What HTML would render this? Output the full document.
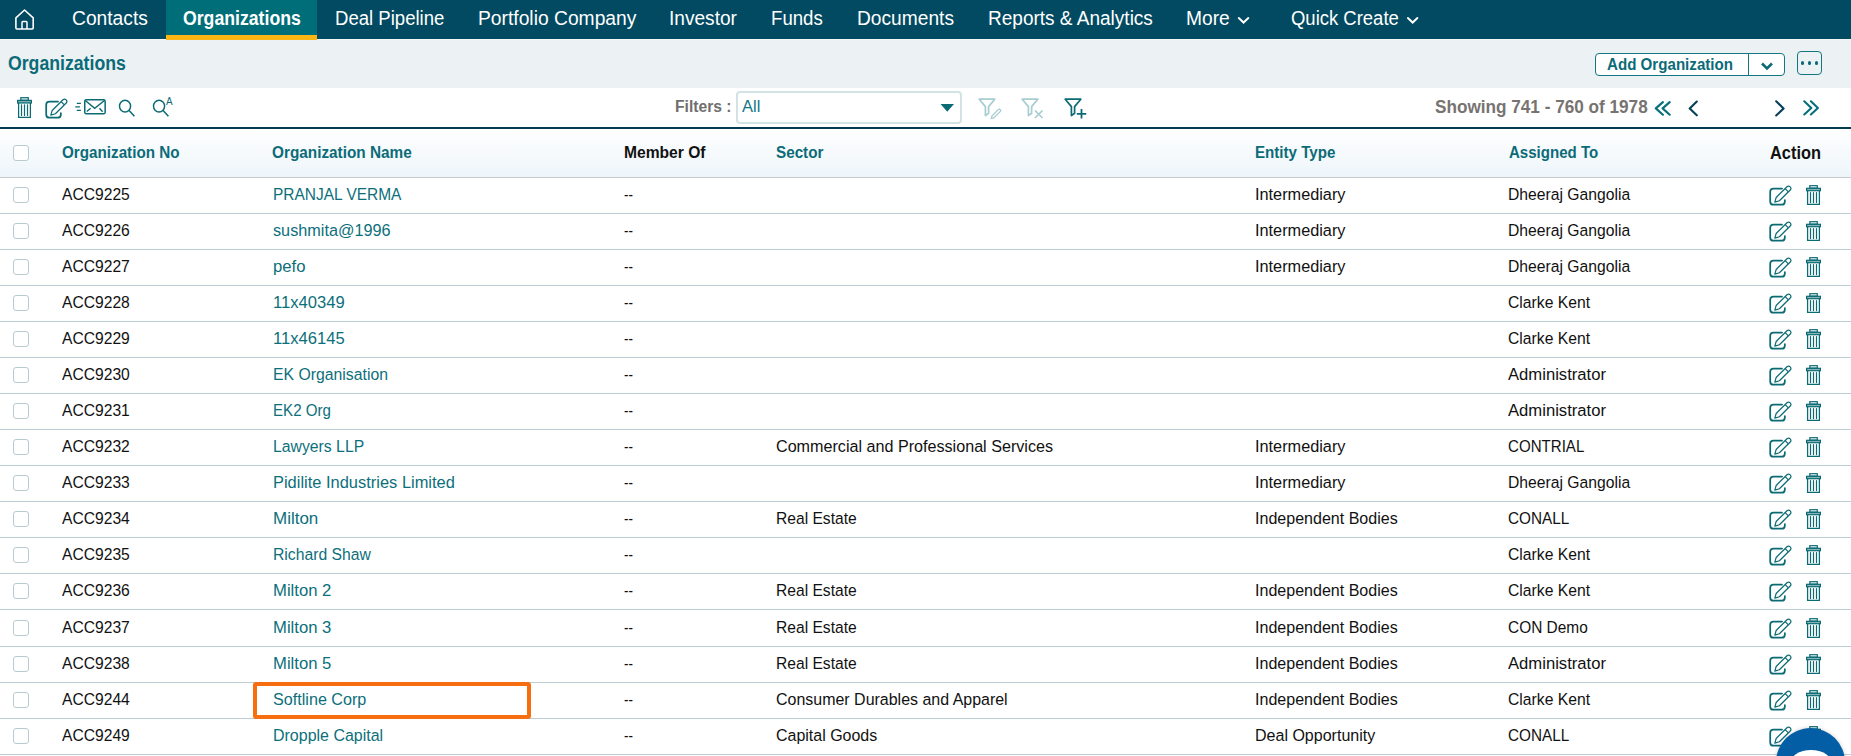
<!DOCTYPE html>
<html><head><meta charset="utf-8"><style>
html,body{margin:0;padding:0}
body{width:1851px;height:756px;overflow:hidden;position:relative;background:#fff;font-family:"Liberation Sans",sans-serif}
.t{position:absolute;white-space:pre;display:inline-block;transform-origin:0 0}
svg{overflow:visible}
</style></head><body>
<div style="position:absolute;left:0;top:0;width:1851px;height:39px;background:#014a62"></div>
<div style="position:absolute;left:0;top:39px;width:1851px;height:1px;background:#f4f7f9"></div>
<div style="position:absolute;left:166px;top:0;width:151px;height:35px;background:#006e78"></div>
<div style="position:absolute;left:166px;top:35px;width:151px;height:5px;background:#fbb515"></div>
<svg style="position:absolute;left:13px;top:8px" width="24" height="24" viewBox="0 0 24 24"><path d="M2.9 20 Q2.9 21 3.9 21 H19.2 Q20.2 21 20.2 20 V9.8 L11.55 2 L2.9 9.8 Z" fill="none" stroke="#fff" stroke-width="1.6" stroke-linejoin="round"/><path d="M9 21 V14.4 Q9 13.6 9.8 13.6 H13.2 Q14 13.6 14 14.4 V21" fill="none" stroke="#fff" stroke-width="1.5"/></svg>
<span class="t" style="left:72px;top:8.83px;font-size:19.38px;line-height:19.38px;font-weight:400;color:#ffffff;font-family:'Liberation Sans', sans-serif;transform:scaleX(0.9926);">Contacts</span>
<span class="t" style="left:182.5px;top:8.83px;font-size:19.38px;line-height:19.38px;font-weight:700;color:#ffffff;font-family:'Liberation Sans', sans-serif;transform:scaleX(0.9127);">Organizations</span>
<span class="t" style="left:334.5px;top:8.83px;font-size:19.38px;line-height:19.38px;font-weight:400;color:#ffffff;font-family:'Liberation Sans', sans-serif;transform:scaleX(0.9588);">Deal Pipeline</span>
<span class="t" style="left:477.5px;top:8.83px;font-size:19.38px;line-height:19.38px;font-weight:400;color:#ffffff;font-family:'Liberation Sans', sans-serif;transform:scaleX(0.9946);">Portfolio Company</span>
<span class="t" style="left:669.3px;top:8.83px;font-size:19.38px;line-height:19.38px;font-weight:400;color:#ffffff;font-family:'Liberation Sans', sans-serif;transform:scaleX(0.9864);">Investor</span>
<span class="t" style="left:771px;top:8.83px;font-size:19.38px;line-height:19.38px;font-weight:400;color:#ffffff;font-family:'Liberation Sans', sans-serif;transform:scaleX(0.9625);">Funds</span>
<span class="t" style="left:857px;top:8.83px;font-size:19.38px;line-height:19.38px;font-weight:400;color:#ffffff;font-family:'Liberation Sans', sans-serif;transform:scaleX(0.9904);">Documents</span>
<span class="t" style="left:987.5px;top:8.83px;font-size:19.38px;line-height:19.38px;font-weight:400;color:#ffffff;font-family:'Liberation Sans', sans-serif;transform:scaleX(0.9823);">Reports &amp; Analytics</span>
<span class="t" style="left:1186px;top:8.83px;font-size:19.38px;line-height:19.38px;font-weight:400;color:#ffffff;font-family:'Liberation Sans', sans-serif;transform:scaleX(0.9922);">More</span>
<span class="t" style="left:1291px;top:8.83px;font-size:19.38px;line-height:19.38px;font-weight:400;color:#ffffff;font-family:'Liberation Sans', sans-serif;transform:scaleX(0.9541);">Quick Create</span>
<svg style="position:absolute;left:1230px;top:10px" width="200" height="20" viewBox="0 0 200 20"><path d="M8.8 8.1 L13.55 12.6 L18.3 8.1 M177.9 8.1 L182.65 12.6 L187.4 8.1" fill="none" stroke="#fff" stroke-width="2" stroke-linecap="round"/></svg>
<div style="position:absolute;left:0;top:40px;width:1851px;height:48px;background:#ecf1f4"></div>
<span class="t" style="left:8.3px;top:53.73px;font-size:19.38px;line-height:19.38px;font-weight:700;color:#0b6b78;font-family:'Liberation Sans', sans-serif;transform:scaleX(0.9127);">Organizations</span>
<div style="position:absolute;left:1595px;top:53px;width:188px;height:21px;border:1px solid #137781;border-radius:4px;background:#fff"></div>
<div style="position:absolute;left:1748px;top:54px;width:1px;height:21px;background:#137781"></div>
<span class="t" style="left:1606.5px;top:56.13px;font-size:16.32px;line-height:16.32px;font-weight:700;color:#0b6b78;font-family:'Liberation Sans', sans-serif;transform:scaleX(0.9269);">Add Organization</span>
<svg style="position:absolute;left:1759px;top:60px" width="16" height="12" viewBox="0 0 16 12"><path d="M3 3.5 L8 8.5 L13 3.5" fill="none" stroke="#0b6b78" stroke-width="2.6"/></svg>
<div style="position:absolute;left:1797px;top:51px;width:23px;height:22px;border:1px solid #137781;border-radius:4px;background:transparent"></div>
<div style="position:absolute;left:1800.9px;top:61px;width:3.6px;height:3.6px;border-radius:50%;background:#0b6b78"></div>
<div style="position:absolute;left:1807.7px;top:61px;width:3.6px;height:3.6px;border-radius:50%;background:#0b6b78"></div>
<div style="position:absolute;left:1814.5px;top:61px;width:3.6px;height:3.6px;border-radius:50%;background:#0b6b78"></div>
<div style="position:absolute;left:0;top:127px;width:1851px;height:2px;background:#043a52"></div>
<svg style="position:absolute;left:17px;top:97px" width="16" height="23" preserveAspectRatio="none" viewBox="0 0 16 22"><rect x="3.8" y="0.7" width="7.5" height="2.4" fill="none" stroke="#0b6b74" stroke-width="1.2"/><rect x="0.6" y="3.3" width="13.8" height="2.4" fill="#0b6b74" fill-opacity="0.5" stroke="#0b6b74" stroke-width="1.2"/><path d="M1.6 5.8 V19.4 H13.4 V5.8" fill="none" stroke="#0b6b74" stroke-width="1.25"/><path d="M4.5 7.6 V17.6 M7.5 7.6 V17.6 M10.5 7.6 V17.6" stroke="#0b6b74" stroke-width="1.2" stroke-linecap="round"/></svg>
<svg style="position:absolute;left:44.7px;top:97.6px" width="23" height="22" viewBox="0 0 23 22"><path d="M13 3.5 H4.5 Q1.2 3.5 1.2 6.8 V16.4 Q1.2 19.7 4.5 19.7 H12.55 Q15.85 19.7 15.85 16.4 V15.2" fill="none" stroke="#0b6b74" stroke-width="1.75" stroke-linecap="round"/><path d="M5.8 17.1 L7.16 12.51 L17.98 1.77 A2.3 2.3 0 0 1 21.22 5.03 L10.4 15.77 Z" fill="none" stroke="#0b6b74" stroke-width="1.2" stroke-linejoin="round"/><path d="M16.14 3.6 L19.38 6.86" stroke="#0b6b74" stroke-width="1.3"/></svg>
<svg style="position:absolute;left:74px;top:97px" width="34" height="20" viewBox="0 0 34 20"><rect x="10.75" y="2.75" width="20.4" height="14.1" rx="1.6" fill="none" stroke="#0b6b74" stroke-width="1.5"/><path d="M11 3.2 L20.7 11.4 L30.8 3.2" fill="none" stroke="#0b6b74" stroke-width="1.4"/><path d="M12.8 14.5 L16.6 11.3 M25.5 11.3 L28.6 14.7" stroke="#0b6b74" stroke-width="1.4"/><path d="M2.8 6.35 H6.9 M1.3 9.9 H5.9 M2.8 13.4 H6.9" stroke="#0b6b74" stroke-width="1.3"/></svg>
<svg style="position:absolute;left:118px;top:98px" width="18" height="20" viewBox="0 0 18 20"><ellipse cx="7.05" cy="8.1" rx="5.55" ry="5.95" fill="none" stroke="#0b6b74" stroke-width="1.45"/><path d="M11.1 12.4 L16.4 18.3" stroke="#0b6b74" stroke-width="1.5"/></svg>
<svg style="position:absolute;left:151.7px;top:98px" width="18" height="20" viewBox="0 0 18 20"><ellipse cx="7.05" cy="8.1" rx="5.55" ry="5.95" fill="none" stroke="#0b6b74" stroke-width="1.45"/><path d="M11.1 12.4 L16.4 18.3" stroke="#0b6b74" stroke-width="1.5"/></svg>
<span class="t" style="left:166.2px;top:96.53px;font-size:10.20px;line-height:10.20px;font-weight:400;color:#0b6b74;font-family:'Liberation Sans', sans-serif;transform:scaleX(0.9705);">A</span>
<span class="t" style="left:675.3px;top:98.13px;font-size:16.32px;line-height:16.32px;font-weight:700;color:#6f6f6f;font-family:'Liberation Sans', sans-serif;transform:scaleX(0.9604);">Filters :</span>
<div style="position:absolute;left:735.9px;top:91.1px;width:222.6px;height:28.7px;border:2px solid #d3e2e5;border-radius:4px"></div>
<span class="t" style="left:741.5px;top:98.13px;font-size:16.32px;line-height:16.32px;font-weight:400;color:#137884;font-family:'Liberation Sans', sans-serif;transform:scaleX(1.0143);">All</span>
<svg style="position:absolute;left:940px;top:103px" width="15" height="10" viewBox="0 0 15 10"><path d="M0.5 1 H14 L7.25 8.8 Z" fill="#0b6b74"/></svg>
<svg style="position:absolute;left:978px;top:98px" width="25" height="21" viewBox="0 0 25 21"><path d="M1.2 1.2 H16.8 L10.6 8.6 V15.2 L7.4 17.6 V8.6 Z" fill="none" stroke="#a7cdd1" stroke-width="1.7" stroke-linejoin="round"/><path d="M13.8 18.2 L20.2 11.6 Q21.3 10.6 22.3 11.6 Q23.2 12.6 22.2 13.6 L15.8 19.9 L13.3 20.5 Z" fill="none" stroke="#a7cdd1" stroke-width="1.3"/></svg>
<svg style="position:absolute;left:1021px;top:98px" width="25" height="21" viewBox="0 0 25 21"><path d="M1.2 1.2 H16.8 L10.6 8.6 V15.2 L7.4 17.6 V8.6 Z" fill="none" stroke="#a7cdd1" stroke-width="1.7" stroke-linejoin="round"/><path d="M14 12.5 L21.5 20 M21.5 12.5 L14 20" stroke="#a7cdd1" stroke-width="1.7"/></svg>
<svg style="position:absolute;left:1064px;top:98px" width="25" height="21" viewBox="0 0 25 21"><path d="M1.2 1.2 H16.8 L10.6 8.6 V15.2 L7.4 17.6 V8.6 Z" fill="none" stroke="#0b6b74" stroke-width="1.7" stroke-linejoin="round"/><path d="M17.5 11 V20.5 M12.8 15.8 H22.3" stroke="#0b6b74" stroke-width="1.8"/></svg>
<span class="t" style="left:1434.5px;top:98.63px;font-size:17.85px;line-height:17.85px;font-weight:700;color:#777371;font-family:'Liberation Sans', sans-serif;transform:scaleX(0.9618);">Showing 741 - 760 of 1978</span>
<svg style="position:absolute;left:1640px;top:92px" width="190" height="32" viewBox="0 0 190 32"><path d="M22.9 10.1 L15.8 16.4 L22.9 22.7 M29.7 10.1 L22.6 16.4 L29.7 22.7 M164.3 9.3 L171.3 15.9 L164.3 22.5 M170.9 9.3 L177.9 15.9 L170.9 22.5" fill="none" stroke="#06707b" stroke-width="2.1" stroke-linecap="round" stroke-linejoin="round"/><path d="M56.8 9.5 L49.7 16.4 L56.8 23.3 M136.2 9.3 L143.6 16.4 L136.2 23.5" fill="none" stroke="#063f58" stroke-width="2.1" stroke-linecap="round" stroke-linejoin="round"/></svg>
<div style="position:absolute;left:0;top:129px;width:1851px;height:48px;background:linear-gradient(#ffffff,#edf5fa)"></div>
<div style="position:absolute;left:0;top:177px;width:1851px;height:1px;background:#c8cacc"></div>
<div style="position:absolute;left:13px;top:145px;width:13.5px;height:13.5px;border:1.3px solid #b9cbd2;border-radius:3px;background:#fff"></div>
<span class="t" style="left:61.5px;top:143.93px;font-size:16.32px;line-height:16.32px;font-weight:700;color:#0b6b78;font-family:'Liberation Sans', sans-serif;transform:scaleX(0.9325);">Organization No</span>
<span class="t" style="left:272.3px;top:143.93px;font-size:16.32px;line-height:16.32px;font-weight:700;color:#0b6b78;font-family:'Liberation Sans', sans-serif;transform:scaleX(0.9398);">Organization Name</span>
<span class="t" style="left:624.4px;top:143.93px;font-size:16.32px;line-height:16.32px;font-weight:700;color:#111;font-family:'Liberation Sans', sans-serif;transform:scaleX(0.9572);">Member Of</span>
<span class="t" style="left:776px;top:143.93px;font-size:16.32px;line-height:16.32px;font-weight:700;color:#0b6b78;font-family:'Liberation Sans', sans-serif;transform:scaleX(0.9336);">Sector</span>
<span class="t" style="left:1254.5px;top:143.93px;font-size:16.32px;line-height:16.32px;font-weight:700;color:#0b6b78;font-family:'Liberation Sans', sans-serif;transform:scaleX(0.9276);">Entity Type</span>
<span class="t" style="left:1508.5px;top:143.93px;font-size:16.32px;line-height:16.32px;font-weight:700;color:#0b6b78;font-family:'Liberation Sans', sans-serif;transform:scaleX(0.9230);">Assigned To</span>
<span class="t" style="left:1769.5px;top:143.59px;font-size:18.36px;line-height:18.36px;font-weight:700;color:#111;font-family:'Liberation Sans', sans-serif;transform:scaleX(0.8924);">Action</span>
<div style="position:absolute;left:0;top:213px;width:1851px;height:1px;background:#bccdd5"></div>
<div style="position:absolute;left:13px;top:187px;width:13.5px;height:13.5px;border:1.3px solid #b9cbd2;border-radius:3px;background:#fff"></div>
<span class="t" style="left:61.8px;top:185.93px;font-size:16.32px;line-height:16.32px;font-weight:400;color:#111;font-family:'Liberation Sans', sans-serif;transform:scaleX(0.9589);">ACC9225</span>
<span class="t" style="left:273px;top:185.93px;font-size:16.32px;line-height:16.32px;font-weight:400;color:#0c6f7b;font-family:'Liberation Sans', sans-serif;transform:scaleX(0.9488);">PRANJAL VERMA</span>
<span class="t" style="left:624.2px;top:185.93px;font-size:16.32px;line-height:16.32px;font-weight:400;color:#111;font-family:'Liberation Sans', sans-serif;transform:scaleX(0.8214);">--</span>
<span class="t" style="left:1254.8px;top:185.93px;font-size:16.32px;line-height:16.32px;font-weight:400;color:#111;font-family:'Liberation Sans', sans-serif;transform:scaleX(0.9980);">Intermediary</span>
<span class="t" style="left:1507.8px;top:185.93px;font-size:16.32px;line-height:16.32px;font-weight:400;color:#111;font-family:'Liberation Sans', sans-serif;transform:scaleX(0.9619);">Dheeraj Gangolia</span>
<svg style="position:absolute;left:1769px;top:185px" width="23" height="22" viewBox="0 0 23 22"><path d="M13 3.5 H4.5 Q1.2 3.5 1.2 6.8 V16.4 Q1.2 19.7 4.5 19.7 H12.55 Q15.85 19.7 15.85 16.4 V15.2" fill="none" stroke="#0b6b74" stroke-width="1.75" stroke-linecap="round"/><path d="M5.8 17.1 L7.16 12.51 L17.98 1.77 A2.3 2.3 0 0 1 21.22 5.03 L10.4 15.77 Z" fill="none" stroke="#0b6b74" stroke-width="1.2" stroke-linejoin="round"/><path d="M16.14 3.6 L19.38 6.86" stroke="#0b6b74" stroke-width="1.3"/></svg>
<svg style="position:absolute;left:1806px;top:185px" width="16" height="22" viewBox="0 0 16 22"><rect x="3.8" y="0.7" width="7.5" height="2.4" fill="none" stroke="#0b6b74" stroke-width="1.2"/><rect x="0.6" y="3.3" width="13.8" height="2.4" fill="#0b6b74" fill-opacity="0.5" stroke="#0b6b74" stroke-width="1.2"/><path d="M1.6 5.8 V19.4 H13.4 V5.8" fill="none" stroke="#0b6b74" stroke-width="1.25"/><path d="M4.5 7.6 V17.6 M7.5 7.6 V17.6 M10.5 7.6 V17.6" stroke="#0b6b74" stroke-width="1.2" stroke-linecap="round"/></svg>
<div style="position:absolute;left:0;top:249px;width:1851px;height:1px;background:#bccdd5"></div>
<div style="position:absolute;left:13px;top:223px;width:13.5px;height:13.5px;border:1.3px solid #b9cbd2;border-radius:3px;background:#fff"></div>
<span class="t" style="left:61.8px;top:221.93px;font-size:16.32px;line-height:16.32px;font-weight:400;color:#111;font-family:'Liberation Sans', sans-serif;transform:scaleX(0.9589);">ACC9226</span>
<span class="t" style="left:273px;top:221.93px;font-size:16.32px;line-height:16.32px;font-weight:400;color:#0c6f7b;font-family:'Liberation Sans', sans-serif;transform:scaleX(0.9948);">sushmita@1996</span>
<span class="t" style="left:624.2px;top:221.93px;font-size:16.32px;line-height:16.32px;font-weight:400;color:#111;font-family:'Liberation Sans', sans-serif;transform:scaleX(0.8214);">--</span>
<span class="t" style="left:1254.8px;top:221.93px;font-size:16.32px;line-height:16.32px;font-weight:400;color:#111;font-family:'Liberation Sans', sans-serif;transform:scaleX(0.9980);">Intermediary</span>
<span class="t" style="left:1507.8px;top:221.93px;font-size:16.32px;line-height:16.32px;font-weight:400;color:#111;font-family:'Liberation Sans', sans-serif;transform:scaleX(0.9619);">Dheeraj Gangolia</span>
<svg style="position:absolute;left:1769px;top:221px" width="23" height="22" viewBox="0 0 23 22"><path d="M13 3.5 H4.5 Q1.2 3.5 1.2 6.8 V16.4 Q1.2 19.7 4.5 19.7 H12.55 Q15.85 19.7 15.85 16.4 V15.2" fill="none" stroke="#0b6b74" stroke-width="1.75" stroke-linecap="round"/><path d="M5.8 17.1 L7.16 12.51 L17.98 1.77 A2.3 2.3 0 0 1 21.22 5.03 L10.4 15.77 Z" fill="none" stroke="#0b6b74" stroke-width="1.2" stroke-linejoin="round"/><path d="M16.14 3.6 L19.38 6.86" stroke="#0b6b74" stroke-width="1.3"/></svg>
<svg style="position:absolute;left:1806px;top:221px" width="16" height="22" viewBox="0 0 16 22"><rect x="3.8" y="0.7" width="7.5" height="2.4" fill="none" stroke="#0b6b74" stroke-width="1.2"/><rect x="0.6" y="3.3" width="13.8" height="2.4" fill="#0b6b74" fill-opacity="0.5" stroke="#0b6b74" stroke-width="1.2"/><path d="M1.6 5.8 V19.4 H13.4 V5.8" fill="none" stroke="#0b6b74" stroke-width="1.25"/><path d="M4.5 7.6 V17.6 M7.5 7.6 V17.6 M10.5 7.6 V17.6" stroke="#0b6b74" stroke-width="1.2" stroke-linecap="round"/></svg>
<div style="position:absolute;left:0;top:285px;width:1851px;height:1px;background:#bccdd5"></div>
<div style="position:absolute;left:13px;top:259px;width:13.5px;height:13.5px;border:1.3px solid #b9cbd2;border-radius:3px;background:#fff"></div>
<span class="t" style="left:61.8px;top:257.93px;font-size:16.32px;line-height:16.32px;font-weight:400;color:#111;font-family:'Liberation Sans', sans-serif;transform:scaleX(0.9589);">ACC9227</span>
<span class="t" style="left:273px;top:257.93px;font-size:16.32px;line-height:16.32px;font-weight:400;color:#0c6f7b;font-family:'Liberation Sans', sans-serif;transform:scaleX(1.0229);">pefo</span>
<span class="t" style="left:624.2px;top:257.93px;font-size:16.32px;line-height:16.32px;font-weight:400;color:#111;font-family:'Liberation Sans', sans-serif;transform:scaleX(0.8214);">--</span>
<span class="t" style="left:1254.8px;top:257.93px;font-size:16.32px;line-height:16.32px;font-weight:400;color:#111;font-family:'Liberation Sans', sans-serif;transform:scaleX(0.9980);">Intermediary</span>
<span class="t" style="left:1507.8px;top:257.93px;font-size:16.32px;line-height:16.32px;font-weight:400;color:#111;font-family:'Liberation Sans', sans-serif;transform:scaleX(0.9619);">Dheeraj Gangolia</span>
<svg style="position:absolute;left:1769px;top:257px" width="23" height="22" viewBox="0 0 23 22"><path d="M13 3.5 H4.5 Q1.2 3.5 1.2 6.8 V16.4 Q1.2 19.7 4.5 19.7 H12.55 Q15.85 19.7 15.85 16.4 V15.2" fill="none" stroke="#0b6b74" stroke-width="1.75" stroke-linecap="round"/><path d="M5.8 17.1 L7.16 12.51 L17.98 1.77 A2.3 2.3 0 0 1 21.22 5.03 L10.4 15.77 Z" fill="none" stroke="#0b6b74" stroke-width="1.2" stroke-linejoin="round"/><path d="M16.14 3.6 L19.38 6.86" stroke="#0b6b74" stroke-width="1.3"/></svg>
<svg style="position:absolute;left:1806px;top:257px" width="16" height="22" viewBox="0 0 16 22"><rect x="3.8" y="0.7" width="7.5" height="2.4" fill="none" stroke="#0b6b74" stroke-width="1.2"/><rect x="0.6" y="3.3" width="13.8" height="2.4" fill="#0b6b74" fill-opacity="0.5" stroke="#0b6b74" stroke-width="1.2"/><path d="M1.6 5.8 V19.4 H13.4 V5.8" fill="none" stroke="#0b6b74" stroke-width="1.25"/><path d="M4.5 7.6 V17.6 M7.5 7.6 V17.6 M10.5 7.6 V17.6" stroke="#0b6b74" stroke-width="1.2" stroke-linecap="round"/></svg>
<div style="position:absolute;left:0;top:321px;width:1851px;height:1px;background:#bccdd5"></div>
<div style="position:absolute;left:13px;top:295px;width:13.5px;height:13.5px;border:1.3px solid #b9cbd2;border-radius:3px;background:#fff"></div>
<span class="t" style="left:61.8px;top:293.93px;font-size:16.32px;line-height:16.32px;font-weight:400;color:#111;font-family:'Liberation Sans', sans-serif;transform:scaleX(0.9589);">ACC9228</span>
<span class="t" style="left:273px;top:293.93px;font-size:16.32px;line-height:16.32px;font-weight:400;color:#0c6f7b;font-family:'Liberation Sans', sans-serif;transform:scaleX(1.0163);">11x40349</span>
<span class="t" style="left:624.2px;top:293.93px;font-size:16.32px;line-height:16.32px;font-weight:400;color:#111;font-family:'Liberation Sans', sans-serif;transform:scaleX(0.8214);">--</span>
<span class="t" style="left:1507.8px;top:293.93px;font-size:16.32px;line-height:16.32px;font-weight:400;color:#111;font-family:'Liberation Sans', sans-serif;transform:scaleX(0.9626);">Clarke Kent</span>
<svg style="position:absolute;left:1769px;top:293px" width="23" height="22" viewBox="0 0 23 22"><path d="M13 3.5 H4.5 Q1.2 3.5 1.2 6.8 V16.4 Q1.2 19.7 4.5 19.7 H12.55 Q15.85 19.7 15.85 16.4 V15.2" fill="none" stroke="#0b6b74" stroke-width="1.75" stroke-linecap="round"/><path d="M5.8 17.1 L7.16 12.51 L17.98 1.77 A2.3 2.3 0 0 1 21.22 5.03 L10.4 15.77 Z" fill="none" stroke="#0b6b74" stroke-width="1.2" stroke-linejoin="round"/><path d="M16.14 3.6 L19.38 6.86" stroke="#0b6b74" stroke-width="1.3"/></svg>
<svg style="position:absolute;left:1806px;top:293px" width="16" height="22" viewBox="0 0 16 22"><rect x="3.8" y="0.7" width="7.5" height="2.4" fill="none" stroke="#0b6b74" stroke-width="1.2"/><rect x="0.6" y="3.3" width="13.8" height="2.4" fill="#0b6b74" fill-opacity="0.5" stroke="#0b6b74" stroke-width="1.2"/><path d="M1.6 5.8 V19.4 H13.4 V5.8" fill="none" stroke="#0b6b74" stroke-width="1.25"/><path d="M4.5 7.6 V17.6 M7.5 7.6 V17.6 M10.5 7.6 V17.6" stroke="#0b6b74" stroke-width="1.2" stroke-linecap="round"/></svg>
<div style="position:absolute;left:0;top:357px;width:1851px;height:1px;background:#bccdd5"></div>
<div style="position:absolute;left:13px;top:331px;width:13.5px;height:13.5px;border:1.3px solid #b9cbd2;border-radius:3px;background:#fff"></div>
<span class="t" style="left:61.8px;top:329.93px;font-size:16.32px;line-height:16.32px;font-weight:400;color:#111;font-family:'Liberation Sans', sans-serif;transform:scaleX(0.9589);">ACC9229</span>
<span class="t" style="left:273px;top:329.93px;font-size:16.32px;line-height:16.32px;font-weight:400;color:#0c6f7b;font-family:'Liberation Sans', sans-serif;transform:scaleX(1.0163);">11x46145</span>
<span class="t" style="left:624.2px;top:329.93px;font-size:16.32px;line-height:16.32px;font-weight:400;color:#111;font-family:'Liberation Sans', sans-serif;transform:scaleX(0.8214);">--</span>
<span class="t" style="left:1507.8px;top:329.93px;font-size:16.32px;line-height:16.32px;font-weight:400;color:#111;font-family:'Liberation Sans', sans-serif;transform:scaleX(0.9626);">Clarke Kent</span>
<svg style="position:absolute;left:1769px;top:329px" width="23" height="22" viewBox="0 0 23 22"><path d="M13 3.5 H4.5 Q1.2 3.5 1.2 6.8 V16.4 Q1.2 19.7 4.5 19.7 H12.55 Q15.85 19.7 15.85 16.4 V15.2" fill="none" stroke="#0b6b74" stroke-width="1.75" stroke-linecap="round"/><path d="M5.8 17.1 L7.16 12.51 L17.98 1.77 A2.3 2.3 0 0 1 21.22 5.03 L10.4 15.77 Z" fill="none" stroke="#0b6b74" stroke-width="1.2" stroke-linejoin="round"/><path d="M16.14 3.6 L19.38 6.86" stroke="#0b6b74" stroke-width="1.3"/></svg>
<svg style="position:absolute;left:1806px;top:329px" width="16" height="22" viewBox="0 0 16 22"><rect x="3.8" y="0.7" width="7.5" height="2.4" fill="none" stroke="#0b6b74" stroke-width="1.2"/><rect x="0.6" y="3.3" width="13.8" height="2.4" fill="#0b6b74" fill-opacity="0.5" stroke="#0b6b74" stroke-width="1.2"/><path d="M1.6 5.8 V19.4 H13.4 V5.8" fill="none" stroke="#0b6b74" stroke-width="1.25"/><path d="M4.5 7.6 V17.6 M7.5 7.6 V17.6 M10.5 7.6 V17.6" stroke="#0b6b74" stroke-width="1.2" stroke-linecap="round"/></svg>
<div style="position:absolute;left:0;top:393px;width:1851px;height:1px;background:#bccdd5"></div>
<div style="position:absolute;left:13px;top:367px;width:13.5px;height:13.5px;border:1.3px solid #b9cbd2;border-radius:3px;background:#fff"></div>
<span class="t" style="left:61.8px;top:365.93px;font-size:16.32px;line-height:16.32px;font-weight:400;color:#111;font-family:'Liberation Sans', sans-serif;transform:scaleX(0.9589);">ACC9230</span>
<span class="t" style="left:273px;top:365.93px;font-size:16.32px;line-height:16.32px;font-weight:400;color:#0c6f7b;font-family:'Liberation Sans', sans-serif;transform:scaleX(0.9679);">EK Organisation</span>
<span class="t" style="left:624.2px;top:365.93px;font-size:16.32px;line-height:16.32px;font-weight:400;color:#111;font-family:'Liberation Sans', sans-serif;transform:scaleX(0.8214);">--</span>
<span class="t" style="left:1507.8px;top:365.93px;font-size:16.32px;line-height:16.32px;font-weight:400;color:#111;font-family:'Liberation Sans', sans-serif;transform:scaleX(1.0200);">Administrator</span>
<svg style="position:absolute;left:1769px;top:365px" width="23" height="22" viewBox="0 0 23 22"><path d="M13 3.5 H4.5 Q1.2 3.5 1.2 6.8 V16.4 Q1.2 19.7 4.5 19.7 H12.55 Q15.85 19.7 15.85 16.4 V15.2" fill="none" stroke="#0b6b74" stroke-width="1.75" stroke-linecap="round"/><path d="M5.8 17.1 L7.16 12.51 L17.98 1.77 A2.3 2.3 0 0 1 21.22 5.03 L10.4 15.77 Z" fill="none" stroke="#0b6b74" stroke-width="1.2" stroke-linejoin="round"/><path d="M16.14 3.6 L19.38 6.86" stroke="#0b6b74" stroke-width="1.3"/></svg>
<svg style="position:absolute;left:1806px;top:365px" width="16" height="22" viewBox="0 0 16 22"><rect x="3.8" y="0.7" width="7.5" height="2.4" fill="none" stroke="#0b6b74" stroke-width="1.2"/><rect x="0.6" y="3.3" width="13.8" height="2.4" fill="#0b6b74" fill-opacity="0.5" stroke="#0b6b74" stroke-width="1.2"/><path d="M1.6 5.8 V19.4 H13.4 V5.8" fill="none" stroke="#0b6b74" stroke-width="1.25"/><path d="M4.5 7.6 V17.6 M7.5 7.6 V17.6 M10.5 7.6 V17.6" stroke="#0b6b74" stroke-width="1.2" stroke-linecap="round"/></svg>
<div style="position:absolute;left:0;top:429px;width:1851px;height:1px;background:#bccdd5"></div>
<div style="position:absolute;left:13px;top:403px;width:13.5px;height:13.5px;border:1.3px solid #b9cbd2;border-radius:3px;background:#fff"></div>
<span class="t" style="left:61.8px;top:401.93px;font-size:16.32px;line-height:16.32px;font-weight:400;color:#111;font-family:'Liberation Sans', sans-serif;transform:scaleX(0.9589);">ACC9231</span>
<span class="t" style="left:273px;top:401.93px;font-size:16.32px;line-height:16.32px;font-weight:400;color:#0c6f7b;font-family:'Liberation Sans', sans-serif;transform:scaleX(0.9260);">EK2 Org</span>
<span class="t" style="left:624.2px;top:401.93px;font-size:16.32px;line-height:16.32px;font-weight:400;color:#111;font-family:'Liberation Sans', sans-serif;transform:scaleX(0.8214);">--</span>
<span class="t" style="left:1507.8px;top:401.93px;font-size:16.32px;line-height:16.32px;font-weight:400;color:#111;font-family:'Liberation Sans', sans-serif;transform:scaleX(1.0200);">Administrator</span>
<svg style="position:absolute;left:1769px;top:401px" width="23" height="22" viewBox="0 0 23 22"><path d="M13 3.5 H4.5 Q1.2 3.5 1.2 6.8 V16.4 Q1.2 19.7 4.5 19.7 H12.55 Q15.85 19.7 15.85 16.4 V15.2" fill="none" stroke="#0b6b74" stroke-width="1.75" stroke-linecap="round"/><path d="M5.8 17.1 L7.16 12.51 L17.98 1.77 A2.3 2.3 0 0 1 21.22 5.03 L10.4 15.77 Z" fill="none" stroke="#0b6b74" stroke-width="1.2" stroke-linejoin="round"/><path d="M16.14 3.6 L19.38 6.86" stroke="#0b6b74" stroke-width="1.3"/></svg>
<svg style="position:absolute;left:1806px;top:401px" width="16" height="22" viewBox="0 0 16 22"><rect x="3.8" y="0.7" width="7.5" height="2.4" fill="none" stroke="#0b6b74" stroke-width="1.2"/><rect x="0.6" y="3.3" width="13.8" height="2.4" fill="#0b6b74" fill-opacity="0.5" stroke="#0b6b74" stroke-width="1.2"/><path d="M1.6 5.8 V19.4 H13.4 V5.8" fill="none" stroke="#0b6b74" stroke-width="1.25"/><path d="M4.5 7.6 V17.6 M7.5 7.6 V17.6 M10.5 7.6 V17.6" stroke="#0b6b74" stroke-width="1.2" stroke-linecap="round"/></svg>
<div style="position:absolute;left:0;top:465px;width:1851px;height:1px;background:#bccdd5"></div>
<div style="position:absolute;left:13px;top:439px;width:13.5px;height:13.5px;border:1.3px solid #b9cbd2;border-radius:3px;background:#fff"></div>
<span class="t" style="left:61.8px;top:437.93px;font-size:16.32px;line-height:16.32px;font-weight:400;color:#111;font-family:'Liberation Sans', sans-serif;transform:scaleX(0.9589);">ACC9232</span>
<span class="t" style="left:273px;top:437.93px;font-size:16.32px;line-height:16.32px;font-weight:400;color:#0c6f7b;font-family:'Liberation Sans', sans-serif;transform:scaleX(0.9668);">Lawyers LLP</span>
<span class="t" style="left:624.2px;top:437.93px;font-size:16.32px;line-height:16.32px;font-weight:400;color:#111;font-family:'Liberation Sans', sans-serif;transform:scaleX(0.8214);">--</span>
<span class="t" style="left:775.9px;top:437.93px;font-size:16.32px;line-height:16.32px;font-weight:400;color:#111;font-family:'Liberation Sans', sans-serif;transform:scaleX(0.9889);">Commercial and Professional Services</span>
<span class="t" style="left:1254.8px;top:437.93px;font-size:16.32px;line-height:16.32px;font-weight:400;color:#111;font-family:'Liberation Sans', sans-serif;transform:scaleX(0.9980);">Intermediary</span>
<span class="t" style="left:1507.8px;top:437.93px;font-size:16.32px;line-height:16.32px;font-weight:400;color:#111;font-family:'Liberation Sans', sans-serif;transform:scaleX(0.9252);">CONTRIAL</span>
<svg style="position:absolute;left:1769px;top:437px" width="23" height="22" viewBox="0 0 23 22"><path d="M13 3.5 H4.5 Q1.2 3.5 1.2 6.8 V16.4 Q1.2 19.7 4.5 19.7 H12.55 Q15.85 19.7 15.85 16.4 V15.2" fill="none" stroke="#0b6b74" stroke-width="1.75" stroke-linecap="round"/><path d="M5.8 17.1 L7.16 12.51 L17.98 1.77 A2.3 2.3 0 0 1 21.22 5.03 L10.4 15.77 Z" fill="none" stroke="#0b6b74" stroke-width="1.2" stroke-linejoin="round"/><path d="M16.14 3.6 L19.38 6.86" stroke="#0b6b74" stroke-width="1.3"/></svg>
<svg style="position:absolute;left:1806px;top:437px" width="16" height="22" viewBox="0 0 16 22"><rect x="3.8" y="0.7" width="7.5" height="2.4" fill="none" stroke="#0b6b74" stroke-width="1.2"/><rect x="0.6" y="3.3" width="13.8" height="2.4" fill="#0b6b74" fill-opacity="0.5" stroke="#0b6b74" stroke-width="1.2"/><path d="M1.6 5.8 V19.4 H13.4 V5.8" fill="none" stroke="#0b6b74" stroke-width="1.25"/><path d="M4.5 7.6 V17.6 M7.5 7.6 V17.6 M10.5 7.6 V17.6" stroke="#0b6b74" stroke-width="1.2" stroke-linecap="round"/></svg>
<div style="position:absolute;left:0;top:501px;width:1851px;height:1px;background:#bccdd5"></div>
<div style="position:absolute;left:13px;top:475px;width:13.5px;height:13.5px;border:1.3px solid #b9cbd2;border-radius:3px;background:#fff"></div>
<span class="t" style="left:61.8px;top:473.93px;font-size:16.32px;line-height:16.32px;font-weight:400;color:#111;font-family:'Liberation Sans', sans-serif;transform:scaleX(0.9589);">ACC9233</span>
<span class="t" style="left:273px;top:473.93px;font-size:16.32px;line-height:16.32px;font-weight:400;color:#0c6f7b;font-family:'Liberation Sans', sans-serif;transform:scaleX(1.0081);">Pidilite Industries Limited</span>
<span class="t" style="left:624.2px;top:473.93px;font-size:16.32px;line-height:16.32px;font-weight:400;color:#111;font-family:'Liberation Sans', sans-serif;transform:scaleX(0.8214);">--</span>
<span class="t" style="left:1254.8px;top:473.93px;font-size:16.32px;line-height:16.32px;font-weight:400;color:#111;font-family:'Liberation Sans', sans-serif;transform:scaleX(0.9980);">Intermediary</span>
<span class="t" style="left:1507.8px;top:473.93px;font-size:16.32px;line-height:16.32px;font-weight:400;color:#111;font-family:'Liberation Sans', sans-serif;transform:scaleX(0.9619);">Dheeraj Gangolia</span>
<svg style="position:absolute;left:1769px;top:473px" width="23" height="22" viewBox="0 0 23 22"><path d="M13 3.5 H4.5 Q1.2 3.5 1.2 6.8 V16.4 Q1.2 19.7 4.5 19.7 H12.55 Q15.85 19.7 15.85 16.4 V15.2" fill="none" stroke="#0b6b74" stroke-width="1.75" stroke-linecap="round"/><path d="M5.8 17.1 L7.16 12.51 L17.98 1.77 A2.3 2.3 0 0 1 21.22 5.03 L10.4 15.77 Z" fill="none" stroke="#0b6b74" stroke-width="1.2" stroke-linejoin="round"/><path d="M16.14 3.6 L19.38 6.86" stroke="#0b6b74" stroke-width="1.3"/></svg>
<svg style="position:absolute;left:1806px;top:473px" width="16" height="22" viewBox="0 0 16 22"><rect x="3.8" y="0.7" width="7.5" height="2.4" fill="none" stroke="#0b6b74" stroke-width="1.2"/><rect x="0.6" y="3.3" width="13.8" height="2.4" fill="#0b6b74" fill-opacity="0.5" stroke="#0b6b74" stroke-width="1.2"/><path d="M1.6 5.8 V19.4 H13.4 V5.8" fill="none" stroke="#0b6b74" stroke-width="1.25"/><path d="M4.5 7.6 V17.6 M7.5 7.6 V17.6 M10.5 7.6 V17.6" stroke="#0b6b74" stroke-width="1.2" stroke-linecap="round"/></svg>
<div style="position:absolute;left:0;top:537px;width:1851px;height:1px;background:#bccdd5"></div>
<div style="position:absolute;left:13px;top:511px;width:13.5px;height:13.5px;border:1.3px solid #b9cbd2;border-radius:3px;background:#fff"></div>
<span class="t" style="left:61.8px;top:509.93px;font-size:16.32px;line-height:16.32px;font-weight:400;color:#111;font-family:'Liberation Sans', sans-serif;transform:scaleX(0.9589);">ACC9234</span>
<span class="t" style="left:273px;top:509.93px;font-size:16.32px;line-height:16.32px;font-weight:400;color:#0c6f7b;font-family:'Liberation Sans', sans-serif;transform:scaleX(1.0397);">Milton</span>
<span class="t" style="left:624.2px;top:509.93px;font-size:16.32px;line-height:16.32px;font-weight:400;color:#111;font-family:'Liberation Sans', sans-serif;transform:scaleX(0.8214);">--</span>
<span class="t" style="left:775.9px;top:509.93px;font-size:16.32px;line-height:16.32px;font-weight:400;color:#111;font-family:'Liberation Sans', sans-serif;transform:scaleX(0.9572);">Real Estate</span>
<span class="t" style="left:1254.8px;top:509.93px;font-size:16.32px;line-height:16.32px;font-weight:400;color:#111;font-family:'Liberation Sans', sans-serif;transform:scaleX(0.9834);">Independent Bodies</span>
<span class="t" style="left:1507.8px;top:509.93px;font-size:16.32px;line-height:16.32px;font-weight:400;color:#111;font-family:'Liberation Sans', sans-serif;transform:scaleX(0.9384);">CONALL</span>
<svg style="position:absolute;left:1769px;top:509px" width="23" height="22" viewBox="0 0 23 22"><path d="M13 3.5 H4.5 Q1.2 3.5 1.2 6.8 V16.4 Q1.2 19.7 4.5 19.7 H12.55 Q15.85 19.7 15.85 16.4 V15.2" fill="none" stroke="#0b6b74" stroke-width="1.75" stroke-linecap="round"/><path d="M5.8 17.1 L7.16 12.51 L17.98 1.77 A2.3 2.3 0 0 1 21.22 5.03 L10.4 15.77 Z" fill="none" stroke="#0b6b74" stroke-width="1.2" stroke-linejoin="round"/><path d="M16.14 3.6 L19.38 6.86" stroke="#0b6b74" stroke-width="1.3"/></svg>
<svg style="position:absolute;left:1806px;top:509px" width="16" height="22" viewBox="0 0 16 22"><rect x="3.8" y="0.7" width="7.5" height="2.4" fill="none" stroke="#0b6b74" stroke-width="1.2"/><rect x="0.6" y="3.3" width="13.8" height="2.4" fill="#0b6b74" fill-opacity="0.5" stroke="#0b6b74" stroke-width="1.2"/><path d="M1.6 5.8 V19.4 H13.4 V5.8" fill="none" stroke="#0b6b74" stroke-width="1.25"/><path d="M4.5 7.6 V17.6 M7.5 7.6 V17.6 M10.5 7.6 V17.6" stroke="#0b6b74" stroke-width="1.2" stroke-linecap="round"/></svg>
<div style="position:absolute;left:0;top:573px;width:1851px;height:1px;background:#bccdd5"></div>
<div style="position:absolute;left:13px;top:547px;width:13.5px;height:13.5px;border:1.3px solid #b9cbd2;border-radius:3px;background:#fff"></div>
<span class="t" style="left:61.8px;top:545.93px;font-size:16.32px;line-height:16.32px;font-weight:400;color:#111;font-family:'Liberation Sans', sans-serif;transform:scaleX(0.9589);">ACC9235</span>
<span class="t" style="left:273px;top:545.93px;font-size:16.32px;line-height:16.32px;font-weight:400;color:#0c6f7b;font-family:'Liberation Sans', sans-serif;transform:scaleX(0.9642);">Richard Shaw</span>
<span class="t" style="left:624.2px;top:545.93px;font-size:16.32px;line-height:16.32px;font-weight:400;color:#111;font-family:'Liberation Sans', sans-serif;transform:scaleX(0.8214);">--</span>
<span class="t" style="left:1507.8px;top:545.93px;font-size:16.32px;line-height:16.32px;font-weight:400;color:#111;font-family:'Liberation Sans', sans-serif;transform:scaleX(0.9626);">Clarke Kent</span>
<svg style="position:absolute;left:1769px;top:545px" width="23" height="22" viewBox="0 0 23 22"><path d="M13 3.5 H4.5 Q1.2 3.5 1.2 6.8 V16.4 Q1.2 19.7 4.5 19.7 H12.55 Q15.85 19.7 15.85 16.4 V15.2" fill="none" stroke="#0b6b74" stroke-width="1.75" stroke-linecap="round"/><path d="M5.8 17.1 L7.16 12.51 L17.98 1.77 A2.3 2.3 0 0 1 21.22 5.03 L10.4 15.77 Z" fill="none" stroke="#0b6b74" stroke-width="1.2" stroke-linejoin="round"/><path d="M16.14 3.6 L19.38 6.86" stroke="#0b6b74" stroke-width="1.3"/></svg>
<svg style="position:absolute;left:1806px;top:545px" width="16" height="22" viewBox="0 0 16 22"><rect x="3.8" y="0.7" width="7.5" height="2.4" fill="none" stroke="#0b6b74" stroke-width="1.2"/><rect x="0.6" y="3.3" width="13.8" height="2.4" fill="#0b6b74" fill-opacity="0.5" stroke="#0b6b74" stroke-width="1.2"/><path d="M1.6 5.8 V19.4 H13.4 V5.8" fill="none" stroke="#0b6b74" stroke-width="1.25"/><path d="M4.5 7.6 V17.6 M7.5 7.6 V17.6 M10.5 7.6 V17.6" stroke="#0b6b74" stroke-width="1.2" stroke-linecap="round"/></svg>
<div style="position:absolute;left:0;top:609px;width:1851px;height:1px;background:#bccdd5"></div>
<div style="position:absolute;left:13px;top:583px;width:13.5px;height:13.5px;border:1.3px solid #b9cbd2;border-radius:3px;background:#fff"></div>
<span class="t" style="left:61.8px;top:581.93px;font-size:16.32px;line-height:16.32px;font-weight:400;color:#111;font-family:'Liberation Sans', sans-serif;transform:scaleX(0.9589);">ACC9236</span>
<span class="t" style="left:273px;top:581.93px;font-size:16.32px;line-height:16.32px;font-weight:400;color:#0c6f7b;font-family:'Liberation Sans', sans-serif;transform:scaleX(1.0211);">Milton 2</span>
<span class="t" style="left:624.2px;top:581.93px;font-size:16.32px;line-height:16.32px;font-weight:400;color:#111;font-family:'Liberation Sans', sans-serif;transform:scaleX(0.8214);">--</span>
<span class="t" style="left:775.9px;top:581.93px;font-size:16.32px;line-height:16.32px;font-weight:400;color:#111;font-family:'Liberation Sans', sans-serif;transform:scaleX(0.9572);">Real Estate</span>
<span class="t" style="left:1254.8px;top:581.93px;font-size:16.32px;line-height:16.32px;font-weight:400;color:#111;font-family:'Liberation Sans', sans-serif;transform:scaleX(0.9834);">Independent Bodies</span>
<span class="t" style="left:1507.8px;top:581.93px;font-size:16.32px;line-height:16.32px;font-weight:400;color:#111;font-family:'Liberation Sans', sans-serif;transform:scaleX(0.9626);">Clarke Kent</span>
<svg style="position:absolute;left:1769px;top:581px" width="23" height="22" viewBox="0 0 23 22"><path d="M13 3.5 H4.5 Q1.2 3.5 1.2 6.8 V16.4 Q1.2 19.7 4.5 19.7 H12.55 Q15.85 19.7 15.85 16.4 V15.2" fill="none" stroke="#0b6b74" stroke-width="1.75" stroke-linecap="round"/><path d="M5.8 17.1 L7.16 12.51 L17.98 1.77 A2.3 2.3 0 0 1 21.22 5.03 L10.4 15.77 Z" fill="none" stroke="#0b6b74" stroke-width="1.2" stroke-linejoin="round"/><path d="M16.14 3.6 L19.38 6.86" stroke="#0b6b74" stroke-width="1.3"/></svg>
<svg style="position:absolute;left:1806px;top:581px" width="16" height="22" viewBox="0 0 16 22"><rect x="3.8" y="0.7" width="7.5" height="2.4" fill="none" stroke="#0b6b74" stroke-width="1.2"/><rect x="0.6" y="3.3" width="13.8" height="2.4" fill="#0b6b74" fill-opacity="0.5" stroke="#0b6b74" stroke-width="1.2"/><path d="M1.6 5.8 V19.4 H13.4 V5.8" fill="none" stroke="#0b6b74" stroke-width="1.25"/><path d="M4.5 7.6 V17.6 M7.5 7.6 V17.6 M10.5 7.6 V17.6" stroke="#0b6b74" stroke-width="1.2" stroke-linecap="round"/></svg>
<div style="position:absolute;left:0;top:646px;width:1851px;height:1px;background:#bccdd5"></div>
<div style="position:absolute;left:13px;top:620px;width:13.5px;height:13.5px;border:1.3px solid #b9cbd2;border-radius:3px;background:#fff"></div>
<span class="t" style="left:61.8px;top:618.93px;font-size:16.32px;line-height:16.32px;font-weight:400;color:#111;font-family:'Liberation Sans', sans-serif;transform:scaleX(0.9589);">ACC9237</span>
<span class="t" style="left:273px;top:618.93px;font-size:16.32px;line-height:16.32px;font-weight:400;color:#0c6f7b;font-family:'Liberation Sans', sans-serif;transform:scaleX(1.0211);">Milton 3</span>
<span class="t" style="left:624.2px;top:618.93px;font-size:16.32px;line-height:16.32px;font-weight:400;color:#111;font-family:'Liberation Sans', sans-serif;transform:scaleX(0.8214);">--</span>
<span class="t" style="left:775.9px;top:618.93px;font-size:16.32px;line-height:16.32px;font-weight:400;color:#111;font-family:'Liberation Sans', sans-serif;transform:scaleX(0.9572);">Real Estate</span>
<span class="t" style="left:1254.8px;top:618.93px;font-size:16.32px;line-height:16.32px;font-weight:400;color:#111;font-family:'Liberation Sans', sans-serif;transform:scaleX(0.9834);">Independent Bodies</span>
<span class="t" style="left:1507.8px;top:618.93px;font-size:16.32px;line-height:16.32px;font-weight:400;color:#111;font-family:'Liberation Sans', sans-serif;transform:scaleX(0.9460);">CON Demo</span>
<svg style="position:absolute;left:1769px;top:618px" width="23" height="22" viewBox="0 0 23 22"><path d="M13 3.5 H4.5 Q1.2 3.5 1.2 6.8 V16.4 Q1.2 19.7 4.5 19.7 H12.55 Q15.85 19.7 15.85 16.4 V15.2" fill="none" stroke="#0b6b74" stroke-width="1.75" stroke-linecap="round"/><path d="M5.8 17.1 L7.16 12.51 L17.98 1.77 A2.3 2.3 0 0 1 21.22 5.03 L10.4 15.77 Z" fill="none" stroke="#0b6b74" stroke-width="1.2" stroke-linejoin="round"/><path d="M16.14 3.6 L19.38 6.86" stroke="#0b6b74" stroke-width="1.3"/></svg>
<svg style="position:absolute;left:1806px;top:618px" width="16" height="22" viewBox="0 0 16 22"><rect x="3.8" y="0.7" width="7.5" height="2.4" fill="none" stroke="#0b6b74" stroke-width="1.2"/><rect x="0.6" y="3.3" width="13.8" height="2.4" fill="#0b6b74" fill-opacity="0.5" stroke="#0b6b74" stroke-width="1.2"/><path d="M1.6 5.8 V19.4 H13.4 V5.8" fill="none" stroke="#0b6b74" stroke-width="1.25"/><path d="M4.5 7.6 V17.6 M7.5 7.6 V17.6 M10.5 7.6 V17.6" stroke="#0b6b74" stroke-width="1.2" stroke-linecap="round"/></svg>
<div style="position:absolute;left:0;top:682px;width:1851px;height:1px;background:#bccdd5"></div>
<div style="position:absolute;left:13px;top:656px;width:13.5px;height:13.5px;border:1.3px solid #b9cbd2;border-radius:3px;background:#fff"></div>
<span class="t" style="left:61.8px;top:654.93px;font-size:16.32px;line-height:16.32px;font-weight:400;color:#111;font-family:'Liberation Sans', sans-serif;transform:scaleX(0.9589);">ACC9238</span>
<span class="t" style="left:273px;top:654.93px;font-size:16.32px;line-height:16.32px;font-weight:400;color:#0c6f7b;font-family:'Liberation Sans', sans-serif;transform:scaleX(1.0211);">Milton 5</span>
<span class="t" style="left:624.2px;top:654.93px;font-size:16.32px;line-height:16.32px;font-weight:400;color:#111;font-family:'Liberation Sans', sans-serif;transform:scaleX(0.8214);">--</span>
<span class="t" style="left:775.9px;top:654.93px;font-size:16.32px;line-height:16.32px;font-weight:400;color:#111;font-family:'Liberation Sans', sans-serif;transform:scaleX(0.9572);">Real Estate</span>
<span class="t" style="left:1254.8px;top:654.93px;font-size:16.32px;line-height:16.32px;font-weight:400;color:#111;font-family:'Liberation Sans', sans-serif;transform:scaleX(0.9834);">Independent Bodies</span>
<span class="t" style="left:1507.8px;top:654.93px;font-size:16.32px;line-height:16.32px;font-weight:400;color:#111;font-family:'Liberation Sans', sans-serif;transform:scaleX(1.0200);">Administrator</span>
<svg style="position:absolute;left:1769px;top:654px" width="23" height="22" viewBox="0 0 23 22"><path d="M13 3.5 H4.5 Q1.2 3.5 1.2 6.8 V16.4 Q1.2 19.7 4.5 19.7 H12.55 Q15.85 19.7 15.85 16.4 V15.2" fill="none" stroke="#0b6b74" stroke-width="1.75" stroke-linecap="round"/><path d="M5.8 17.1 L7.16 12.51 L17.98 1.77 A2.3 2.3 0 0 1 21.22 5.03 L10.4 15.77 Z" fill="none" stroke="#0b6b74" stroke-width="1.2" stroke-linejoin="round"/><path d="M16.14 3.6 L19.38 6.86" stroke="#0b6b74" stroke-width="1.3"/></svg>
<svg style="position:absolute;left:1806px;top:654px" width="16" height="22" viewBox="0 0 16 22"><rect x="3.8" y="0.7" width="7.5" height="2.4" fill="none" stroke="#0b6b74" stroke-width="1.2"/><rect x="0.6" y="3.3" width="13.8" height="2.4" fill="#0b6b74" fill-opacity="0.5" stroke="#0b6b74" stroke-width="1.2"/><path d="M1.6 5.8 V19.4 H13.4 V5.8" fill="none" stroke="#0b6b74" stroke-width="1.25"/><path d="M4.5 7.6 V17.6 M7.5 7.6 V17.6 M10.5 7.6 V17.6" stroke="#0b6b74" stroke-width="1.2" stroke-linecap="round"/></svg>
<div style="position:absolute;left:0;top:718px;width:1851px;height:1px;background:#bccdd5"></div>
<div style="position:absolute;left:13px;top:692px;width:13.5px;height:13.5px;border:1.3px solid #b9cbd2;border-radius:3px;background:#fff"></div>
<span class="t" style="left:61.8px;top:690.93px;font-size:16.32px;line-height:16.32px;font-weight:400;color:#111;font-family:'Liberation Sans', sans-serif;transform:scaleX(0.9589);">ACC9244</span>
<span class="t" style="left:273px;top:690.93px;font-size:16.32px;line-height:16.32px;font-weight:400;color:#0c6f7b;font-family:'Liberation Sans', sans-serif;transform:scaleX(0.9899);">Softline Corp</span>
<span class="t" style="left:624.2px;top:690.93px;font-size:16.32px;line-height:16.32px;font-weight:400;color:#111;font-family:'Liberation Sans', sans-serif;transform:scaleX(0.8214);">--</span>
<span class="t" style="left:775.9px;top:690.93px;font-size:16.32px;line-height:16.32px;font-weight:400;color:#111;font-family:'Liberation Sans', sans-serif;transform:scaleX(0.9789);">Consumer Durables and Apparel</span>
<span class="t" style="left:1254.8px;top:690.93px;font-size:16.32px;line-height:16.32px;font-weight:400;color:#111;font-family:'Liberation Sans', sans-serif;transform:scaleX(0.9834);">Independent Bodies</span>
<span class="t" style="left:1507.8px;top:690.93px;font-size:16.32px;line-height:16.32px;font-weight:400;color:#111;font-family:'Liberation Sans', sans-serif;transform:scaleX(0.9626);">Clarke Kent</span>
<svg style="position:absolute;left:1769px;top:690px" width="23" height="22" viewBox="0 0 23 22"><path d="M13 3.5 H4.5 Q1.2 3.5 1.2 6.8 V16.4 Q1.2 19.7 4.5 19.7 H12.55 Q15.85 19.7 15.85 16.4 V15.2" fill="none" stroke="#0b6b74" stroke-width="1.75" stroke-linecap="round"/><path d="M5.8 17.1 L7.16 12.51 L17.98 1.77 A2.3 2.3 0 0 1 21.22 5.03 L10.4 15.77 Z" fill="none" stroke="#0b6b74" stroke-width="1.2" stroke-linejoin="round"/><path d="M16.14 3.6 L19.38 6.86" stroke="#0b6b74" stroke-width="1.3"/></svg>
<svg style="position:absolute;left:1806px;top:690px" width="16" height="22" viewBox="0 0 16 22"><rect x="3.8" y="0.7" width="7.5" height="2.4" fill="none" stroke="#0b6b74" stroke-width="1.2"/><rect x="0.6" y="3.3" width="13.8" height="2.4" fill="#0b6b74" fill-opacity="0.5" stroke="#0b6b74" stroke-width="1.2"/><path d="M1.6 5.8 V19.4 H13.4 V5.8" fill="none" stroke="#0b6b74" stroke-width="1.25"/><path d="M4.5 7.6 V17.6 M7.5 7.6 V17.6 M10.5 7.6 V17.6" stroke="#0b6b74" stroke-width="1.2" stroke-linecap="round"/></svg>
<div style="position:absolute;left:0;top:754px;width:1851px;height:1px;background:#bccdd5"></div>
<div style="position:absolute;left:13px;top:728px;width:13.5px;height:13.5px;border:1.3px solid #b9cbd2;border-radius:3px;background:#fff"></div>
<span class="t" style="left:61.8px;top:726.93px;font-size:16.32px;line-height:16.32px;font-weight:400;color:#111;font-family:'Liberation Sans', sans-serif;transform:scaleX(0.9589);">ACC9249</span>
<span class="t" style="left:273px;top:726.93px;font-size:16.32px;line-height:16.32px;font-weight:400;color:#0c6f7b;font-family:'Liberation Sans', sans-serif;transform:scaleX(0.9794);">Dropple Capital</span>
<span class="t" style="left:624.2px;top:726.93px;font-size:16.32px;line-height:16.32px;font-weight:400;color:#111;font-family:'Liberation Sans', sans-serif;transform:scaleX(0.8214);">--</span>
<span class="t" style="left:775.9px;top:726.93px;font-size:16.32px;line-height:16.32px;font-weight:400;color:#111;font-family:'Liberation Sans', sans-serif;transform:scaleX(0.9792);">Capital Goods</span>
<span class="t" style="left:1254.8px;top:726.93px;font-size:16.32px;line-height:16.32px;font-weight:400;color:#111;font-family:'Liberation Sans', sans-serif;transform:scaleX(0.9822);">Deal Opportunity</span>
<span class="t" style="left:1507.8px;top:726.93px;font-size:16.32px;line-height:16.32px;font-weight:400;color:#111;font-family:'Liberation Sans', sans-serif;transform:scaleX(0.9384);">CONALL</span>
<svg style="position:absolute;left:1769px;top:726px" width="23" height="22" viewBox="0 0 23 22"><path d="M13 3.5 H4.5 Q1.2 3.5 1.2 6.8 V16.4 Q1.2 19.7 4.5 19.7 H12.55 Q15.85 19.7 15.85 16.4 V15.2" fill="none" stroke="#0b6b74" stroke-width="1.75" stroke-linecap="round"/><path d="M5.8 17.1 L7.16 12.51 L17.98 1.77 A2.3 2.3 0 0 1 21.22 5.03 L10.4 15.77 Z" fill="none" stroke="#0b6b74" stroke-width="1.2" stroke-linejoin="round"/><path d="M16.14 3.6 L19.38 6.86" stroke="#0b6b74" stroke-width="1.3"/></svg>
<svg style="position:absolute;left:1806px;top:726px" width="16" height="22" viewBox="0 0 16 22"><rect x="3.8" y="0.7" width="7.5" height="2.4" fill="none" stroke="#0b6b74" stroke-width="1.2"/><rect x="0.6" y="3.3" width="13.8" height="2.4" fill="#0b6b74" fill-opacity="0.5" stroke="#0b6b74" stroke-width="1.2"/><path d="M1.6 5.8 V19.4 H13.4 V5.8" fill="none" stroke="#0b6b74" stroke-width="1.25"/><path d="M4.5 7.6 V17.6 M7.5 7.6 V17.6 M10.5 7.6 V17.6" stroke="#0b6b74" stroke-width="1.2" stroke-linecap="round"/></svg>
<div style="position:absolute;left:253px;top:682px;width:270px;height:29px;border:4px solid #f66e10;border-radius:3px"></div>
<div style="position:absolute;left:1775.5px;top:728px;width:69px;height:69px;border-radius:50%;background:#045ea6;box-shadow:0 0 4px rgba(0,0,0,0.18)"></div>
<div style="position:absolute;left:1789.5px;top:750.3px;width:42px;height:28px;border-radius:50%;background:#fff"></div>
</body></html>
